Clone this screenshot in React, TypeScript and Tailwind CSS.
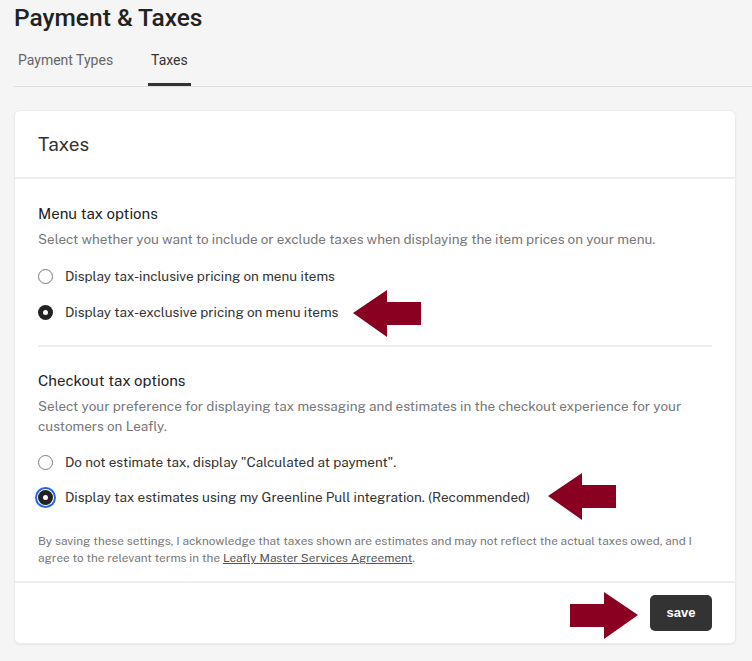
import { ReactNode } from 'react';

const body = { fontFamily: '"Public Sans", "Noto Sans", "Liberation Sans", sans-serif' };
const roboto = { fontFamily: 'Roboto, "Liberation Sans", sans-serif' };

function Radio({ checked, focused }: { checked?: boolean; focused?: boolean }) {
  if (!checked) {
    return <span className="w-[15px] h-[15px] rounded-full border border-[#7a7a7a] bg-white flex-shrink-0" />;
  }
  return (
    <span
      className={
        'w-[15px] h-[15px] rounded-full bg-[#222] flex items-center justify-center flex-shrink-0 ' +
        (focused ? 'ring-2 ring-[#2563eb] ring-offset-1' : '')
      }
    >
      <span className="w-[5px] h-[5px] rounded-full bg-white" />
    </span>
  );
}

function Option({ children, checked, focused }: { children: ReactNode; checked?: boolean; focused?: boolean }) {
  return (
    <label className="flex items-center gap-[12px] h-[20px] text-[13.5px] text-[#333]">
      <Radio checked={checked} focused={focused} />
      <span>{children}</span>
    </label>
  );
}

function Arrow({ dir, className }: { dir: 'left' | 'right'; className: string }) {
  // 68x47 block arrow
  const points =
    dir === 'left'
      ? '0,23 34,0 34,12 68,12 68,35 34,35 34,47'
      : '68,23 34,0 34,12 0,12 0,35 34,35 34,47';
  return (
    <svg className={'absolute ' + className} width="68" height="47" viewBox="0 0 68 47">
      <polygon points={points} fill="#8a0020" />
    </svg>
  );
}

export default function App() {
  return (
    <div className="relative min-h-[661px] bg-[#f5f5f5] pl-[14px] pt-[3px]" style={body}>
      {/* page header */}
      <h1 className="text-[24.5px] leading-[30px] font-medium text-[#222]" style={roboto}>
        Payment &amp; Taxes
      </h1>
      <div className="flex items-end border-b border-[#dedede] mt-[12px]" style={roboto}>
        <div className="px-1 h-[41px] pt-[5px] text-[14px] text-[#666]">Payment Types</div>
        <div className="ml-[31px] px-[3px] h-[41px] pt-[5px] text-[14px] text-[#333] border-b-[3px] border-[#333]">
          Taxes
        </div>
      </div>

      {/* card */}
      <div className="mt-[23px] mr-[16px] bg-white rounded-[6px] shadow-[0_1px_2px_rgba(0,0,0,0.06)] border border-[#ececec]">
        <div className="h-[68px] px-[23px] flex items-center border-b-2 border-[#eeeeee]">
          <h2 className="text-[19px] text-[#333]">Taxes</h2>
        </div>

        <div className="px-[23px] pt-[24px]">
          <section className="pb-[23px] border-b-2 border-[#eeeeee]">
            <h3 className="text-[15px] leading-[22px] text-[#222]">Menu tax options</h3>
            <p className="mt-[4px] text-[13.5px] leading-[20px] text-[#777]">
              Select whether you want to include or exclude taxes when displaying the item prices on your menu.
            </p>
            <div className="mt-[17px] flex flex-col gap-[16px]">
              <Option>Display tax-inclusive pricing on menu items</Option>
              <Option checked>Display tax-exclusive pricing on menu items</Option>
            </div>
          </section>

          <section className="pt-[23px] pb-[14px]">
            <h3 className="text-[15px] leading-[22px] text-[#222]">Checkout tax options</h3>
            <p className="mt-[4px] text-[13.5px] leading-[20px] text-[#777]">
              Select your preference for displaying tax messaging and estimates in the checkout experience for your
              customers on Leafly.
            </p>
            <div className="mt-[16px] flex flex-col gap-[15px]">
              <Option>Do not estimate tax, display "Calculated at payment".</Option>
              <Option checked focused>
                Display tax estimates using my Greenline Pull integration. (Recommended)
              </Option>
            </div>
            <p className="mt-[26px] text-[11.8px] leading-[17px] text-[#777]">
              By saving these settings, I acknowledge that taxes shown are estimates and may not reflect the actual
              taxes owed, and I agree to the relevant terms in the{' '}
              <a className="underline text-[#555]">Leafly Master Services Agreement</a>.
            </p>
          </section>
        </div>

        <div className="border-t-2 border-[#eeeeee] h-[62px] px-[23px] flex items-center justify-end">
          <button
            className="w-[62px] h-[36px] rounded-[5px] bg-[#333] text-white text-[13px] font-bold"
            style={{ fontFamily: '"Liberation Sans", Arial, sans-serif' }}
          >
            save
          </button>
        </div>
      </div>

      <Arrow dir="left" className="left-[353px] top-[290px]" />
      <Arrow dir="left" className="left-[548px] top-[473px]" />
      <Arrow dir="right" className="left-[570px] top-[592px]" />
    </div>
  );
}
